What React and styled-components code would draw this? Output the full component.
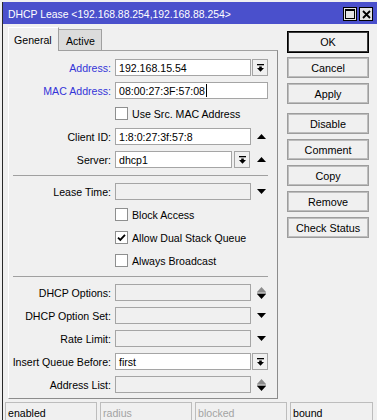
import React from 'react';
import styled, { createGlobalStyle } from 'styled-components';

const GlobalStyle = createGlobalStyle`
  html, body { margin: 0; padding: 0; background: #f0f0f0; }
  body {
    font-family: "Liberation Sans", Arial, sans-serif;
    font-size: 10.6px;
    color: #000;
    overflow: hidden;
  }
  #root { width: 377px; height: 420px; overflow: hidden; }
`;

const Window = styled.div`
  margin: 2px 0 0 2px;
  width: 375px;
  height: 418px;
  box-sizing: border-box;
  border-left: 1px solid #2a2a2a;
  background: #f0f0f0;
  display: flex;
  flex-direction: column;
  overflow: hidden;
`;

const TitleBar = styled.div`
  flex: none;
  height: 22px;
  box-sizing: border-box;
  padding: 2px 4px 0 5px;
  background: #4a50cc;
  display: flex;
  align-items: center;
  justify-content: space-between;
`;

const TitleText = styled.span`
  color: #fff;
  font-size: 10.4px;
  white-space: nowrap;
`;

const TitleButtons = styled.div`
  display: flex;
  gap: 2px;
`;

const TitleButton = styled.div`
  width: 14px;
  height: 14px;
  box-sizing: border-box;
  border: 1px solid #000;
  background: #e4e4e4;
  display: flex;
  align-items: center;
  justify-content: center;
`;

const Body = styled.div`
  flex: none;
  height: 375px;
  box-sizing: border-box;
  padding: 3px 0 0 5px;
  display: flex;
`;

const LeftColumn = styled.div`
  width: 270px;
  flex: none;
  display: flex;
  flex-direction: column;
`;

const TabRow = styled.div`
  height: 23px;
  display: flex;
  align-items: flex-end;
`;

const Tab = styled.div`
  position: relative;
  z-index: 1;
  box-sizing: border-box;
  display: flex;
  align-items: center;
  white-space: nowrap;
  ${(p) =>
    p.$selected
      ? `
    width: 51px;
    height: 24px;
    margin-bottom: -1px;
    padding-left: 5px;
    background: #f0f0f0;
    border-top: 1px solid #fff;
    border-left: 1px solid #fff;
    border-right: 1px solid #a0a0a0;
  `
      : `
    width: 43px;
    height: 21px;
    padding-left: 7px;
    padding-top: 2px;
    background: #dcdcdc;
    border-top: 1px solid #a8a8a8;
    border-right: 1px solid #a0a0a0;
  `}
`;

const Panel = styled.div`
  height: 349px;
  box-sizing: border-box;
  border-top: 1px solid #a0a0a0;
  border-left: 1px solid #fff;
  border-right: 1px solid #8c8c8c;
  border-bottom: 1px solid #8c8c8c;
  padding-top: 8px;
  display: flex;
  flex-direction: column;
  gap: 6px;
`;

const FieldRow = styled.div`
  height: 17px;
  display: flex;
  align-items: center;
  gap: 4px;
`;

const FieldLabel = styled.div`
  width: 102px;
  flex: none;
  text-align: right;
  white-space: nowrap;
  color: ${(p) => (p.$accent ? '#3434d8' : '#000')};
`;

const FieldGrid = styled.div`
  display: grid;
  grid-template-columns: 136px 17px;
  align-items: center;
  height: 17px;
`;

const Inline = styled.div`
  display: flex;
  align-items: center;
  gap: 2px;
`;

const TextBox = styled.div`
  height: 17px;
  width: ${(p) => (p.$width ? `${p.$width}px` : 'auto')};
  box-sizing: border-box;
  border: 1px solid #a5a5a5;
  background: ${(p) => (p.$empty ? '#f0f0f0' : '#fff')};
  padding-left: 3px;
  display: flex;
  align-items: center;
  white-space: nowrap;
  ${(p) => (p.$span ? 'grid-column: 1 / -1;' : '')}
`;

const Caret = styled.span`
  display: inline-block;
  width: 1px;
  height: 13px;
  background: #000;
  margin-left: 1px;
`;

const DropButton = styled.div`
  width: 16px;
  height: 17px;
  box-sizing: border-box;
  border: 1px solid #a5a5a5;
  background: #f0f0f0;
  display: flex;
  align-items: center;
  justify-content: center;
  justify-self: end;
`;

const SideIcon = styled.div`
  justify-self: end;
  margin-right: 2px;
  display: flex;
  align-items: center;
`;

const CheckSpacer = styled.div`
  width: 102px;
  flex: none;
`;

const CheckBox = styled.div`
  width: 13px;
  height: 13px;
  box-sizing: border-box;
  border: 1px solid #8e8f8f;
  background: #fff;
  display: flex;
  align-items: center;
  justify-content: center;
  flex: none;
`;

const CheckLabel = styled.span`
  white-space: nowrap;
`;

const Separator = styled.div`
  height: 1px;
  background: #a0a0a0;
  margin: 1px 9px 1px 4px;
`;

const ButtonColumn = styled.div`
  margin-left: 9px;
  padding-top: 4px;
  width: 82px;
  display: flex;
  flex-direction: column;
  gap: 5px;
`;

const ActionButton = styled.div`
  box-sizing: border-box;
  width: 82px;
  height: ${(p) => (p.$primary ? '22px' : '21px')};
  margin-bottom: ${(p) => (p.$primary ? '-1px' : '0')};
  margin-top: ${(p) => (p.$groupStart ? '4px' : '0')};
  border: 1px solid ${(p) => (p.$primary ? '#000' : '#9d9d9d')};
  box-shadow: inset 0 0 0 1px ${(p) => (p.$primary ? '#3a3a3a' : '#bdbdbd')};
  background: #f0f0f0;
  display: flex;
  align-items: center;
  justify-content: center;
  font-size: 10.8px;
  white-space: nowrap;
`;

const StatusBar = styled.div`
  margin-top: 3px;
  padding-left: 2px;
  display: grid;
  grid-template-columns: 92px 92px 92px 83px;
  gap: 3px;
`;

const StatusCell = styled.div`
  height: 19px;
  box-sizing: border-box;
  border: 1px solid #bdbdbd;
  padding: 2px 0 0 2px;
  line-height: 16px;
  color: ${(p) => (p.$dim ? '#a3a3a3' : '#000')};
`;

const DropIcon = () => (
  <svg width="7" height="8" viewBox="0 0 7 8">
    <rect x="0" y="0" width="7" height="1.3" fill="#000" />
    <path d="M2.2 2.4h2.6v1.6H7L3.5 7.8 0 4h2.2z" fill="#000" />
  </svg>
);

const UpTri = () => (
  <svg width="9" height="5" viewBox="0 0 9 5">
    <path d="M4.5 0L9 5H0z" fill="#000" />
  </svg>
);

const DownTri = () => (
  <svg width="9" height="5" viewBox="0 0 9 5">
    <path d="M0 0h9L4.5 5z" fill="#000" />
  </svg>
);

const UpDown = () => (
  <svg width="9" height="12" viewBox="0 0 9 12">
    <path d="M4.5 0L9 5H0z" fill="#8c8c8c" />
    <rect x="0" y="5.6" width="9" height="1" fill="#5a5a5a" />
    <path d="M0 7h9L4.5 12z" fill="#000" />
  </svg>
);

const CheckMark = () => (
  <svg width="9" height="9" viewBox="0 0 9 9">
    <path d="M1 4.6l2.3 2.3L8 1.8" stroke="#000" strokeWidth="1.8" fill="none" />
  </svg>
);

const MaxIcon = () => (
  <svg width="10" height="10" viewBox="0 0 10 10">
    <rect x="0.5" y="0.5" width="9" height="9" fill="none" stroke="#000" />
    <rect x="0" y="0" width="10" height="2" fill="#000" />
  </svg>
);

const CloseIcon = () => (
  <svg width="9" height="9" viewBox="0 0 9 9">
    <path d="M1 1l7 7M8 1L1 8" stroke="#000" strokeWidth="1.8" />
  </svg>
);

function Field({ label, accent, children }) {
  return (
    <FieldRow>
      <FieldLabel $accent={accent}>{label}</FieldLabel>
      <FieldGrid>{children}</FieldGrid>
    </FieldRow>
  );
}

function Check({ label, checked }) {
  return (
    <FieldRow>
      <CheckSpacer />
      <CheckBox>{checked && <CheckMark />}</CheckBox>
      <CheckLabel>{label}</CheckLabel>
    </FieldRow>
  );
}

const buttons = [
  { label: 'OK', primary: true },
  { label: 'Cancel' },
  { label: 'Apply' },
  { label: 'Disable', groupStart: true },
  { label: 'Comment' },
  { label: 'Copy' },
  { label: 'Remove' },
  { label: 'Check Status' },
];

const statuses = [
  { text: 'enabled' },
  { text: 'radius', dim: true },
  { text: 'blocked', dim: true },
  { text: 'bound' },
];

export default function App() {
  return (
    <>
      <GlobalStyle />
      <Window>
        <TitleBar>
          <TitleText>DHCP Lease &lt;192.168.88.254,192.168.88.254&gt;</TitleText>
          <TitleButtons>
            <TitleButton><MaxIcon /></TitleButton>
            <TitleButton><CloseIcon /></TitleButton>
          </TitleButtons>
        </TitleBar>
        <Body>
          <LeftColumn>
            <TabRow>
              <Tab $selected>General</Tab>
              <Tab>Active</Tab>
            </TabRow>
            <Panel>
              <Field label="Address:" accent>
                <TextBox>192.168.15.54</TextBox>
                <DropButton><DropIcon /></DropButton>
              </Field>
              <Field label="MAC Address:" accent>
                <TextBox $span>08:00:27:3F:57:08<Caret /></TextBox>
              </Field>
              <Check label="Use Src. MAC Address" />
              <Field label="Client ID:">
                <TextBox>1:8:0:27:3f:57:8</TextBox>
                <SideIcon><UpTri /></SideIcon>
              </Field>
              <Field label="Server:">
                <Inline>
                  <TextBox $width={117}>dhcp1</TextBox>
                  <DropButton><DropIcon /></DropButton>
                </Inline>
                <SideIcon><UpTri /></SideIcon>
              </Field>
              <Separator />
              <Field label="Lease Time:">
                <TextBox $empty />
                <SideIcon><DownTri /></SideIcon>
              </Field>
              <Check label="Block Access" />
              <Check label="Allow Dual Stack Queue" checked />
              <Check label="Always Broadcast" />
              <Separator />
              <Field label="DHCP Options:">
                <TextBox $empty />
                <SideIcon><UpDown /></SideIcon>
              </Field>
              <Field label="DHCP Option Set:">
                <TextBox $empty />
                <SideIcon><DownTri /></SideIcon>
              </Field>
              <Field label="Rate Limit:">
                <TextBox $empty />
                <SideIcon><DownTri /></SideIcon>
              </Field>
              <Field label="Insert Queue Before:">
                <TextBox>first</TextBox>
                <DropButton><DropIcon /></DropButton>
              </Field>
              <Field label="Address List:">
                <TextBox $empty />
                <SideIcon><UpDown /></SideIcon>
              </Field>
            </Panel>
          </LeftColumn>
          <ButtonColumn>
            {buttons.map((b) => (
              <ActionButton key={b.label} $primary={b.primary} $groupStart={b.groupStart}>
                {b.label}
              </ActionButton>
            ))}
          </ButtonColumn>
        </Body>
        <StatusBar>
          {statuses.map((s) => (
            <StatusCell key={s.text} $dim={s.dim}>{s.text}</StatusCell>
          ))}
        </StatusBar>
      </Window>
    </>
  );
}
